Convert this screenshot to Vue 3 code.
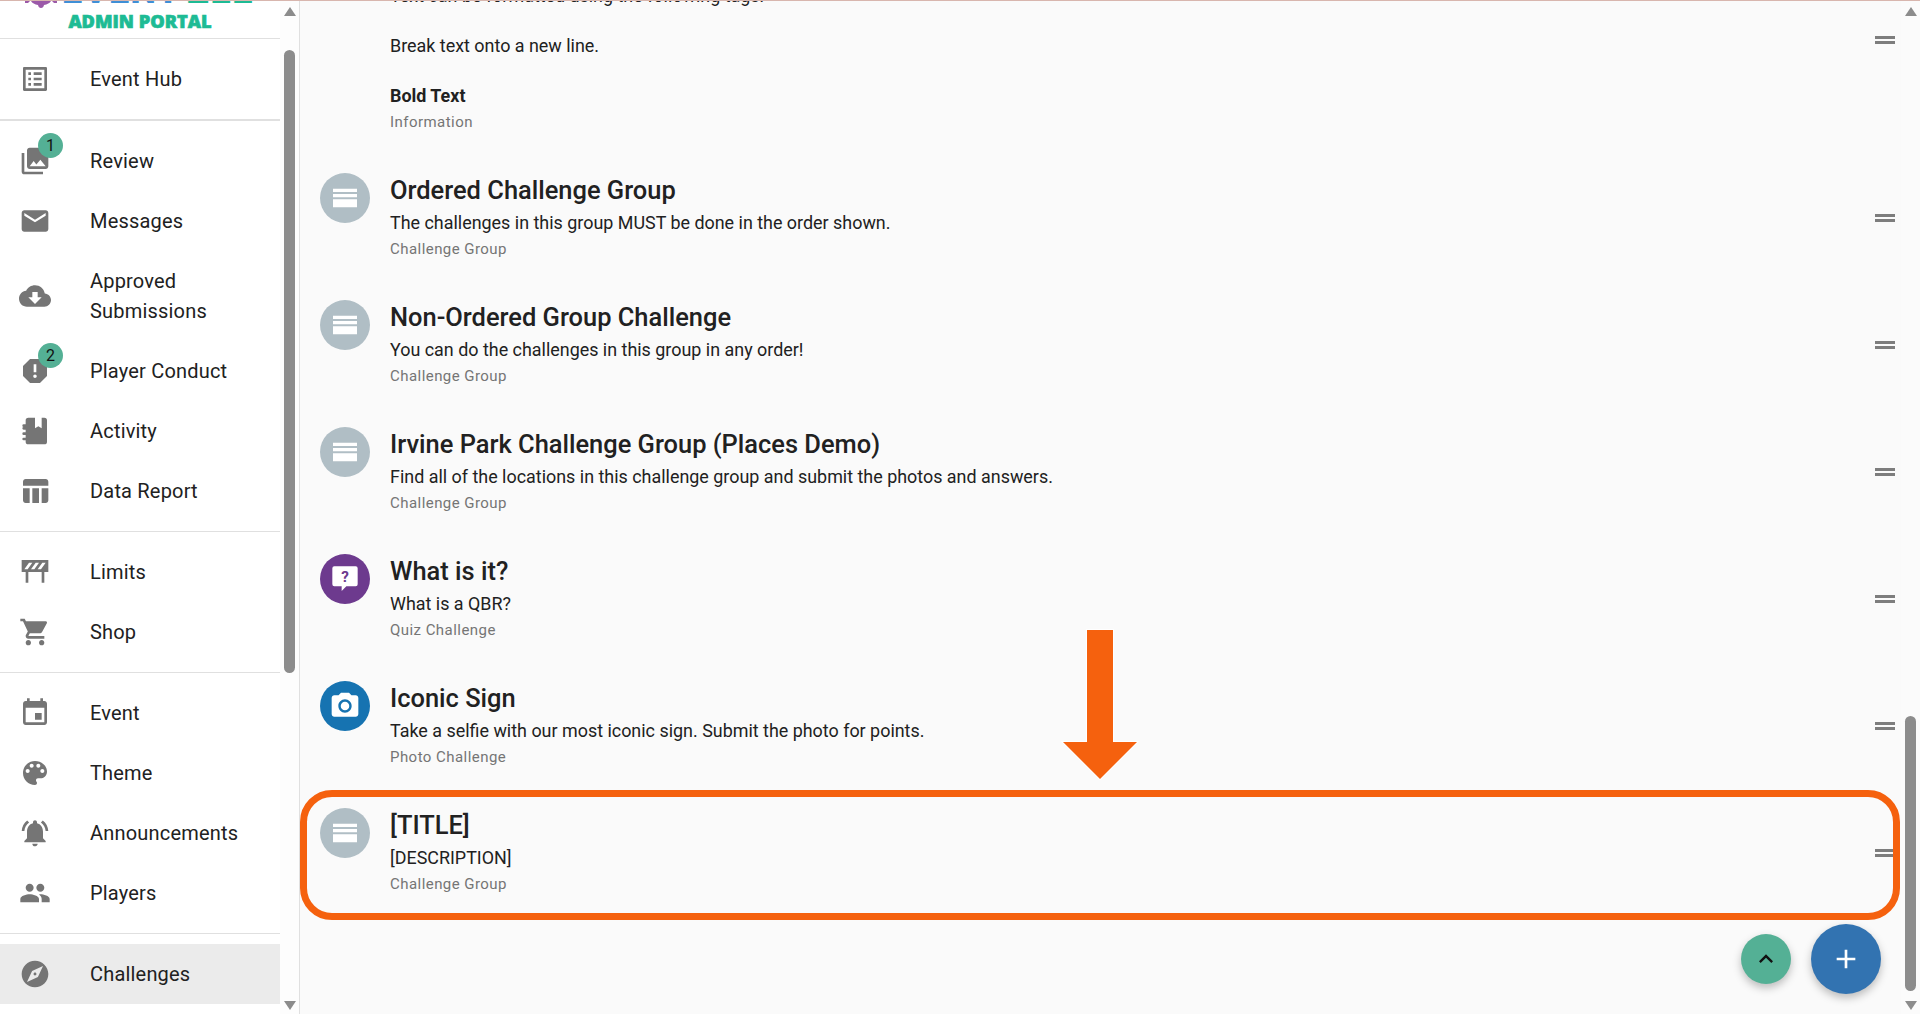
<script setup>
const icons = {
  hub: 'M19 5v14H5V5h14m1.1-2H3.9c-.5 0-.9.4-.9.9v16.2c0 .4.4.9.9.9h16.2c.4 0 .9-.5.9-.9V3.9c0-.5-.5-.9-.9-.9zM11 7h6v2h-6V7zm0 4h6v2h-6v-2zm0 4h6v2h-6zM7 7h2v2H7zm0 4h2v2H7zm0 4h2v2H7z',
  review: 'M22 16V4c0-1.1-.9-2-2-2H8c-1.1 0-2 .9-2 2v12c0 1.1.9 2 2 2h12c1.1 0 2-.9 2-2zm-11-4l2.03 2.71L16 11l4 5H8l3-4zM2 6v14c0 1.1.9 2 2 2h14v-2H4V6H2z',
  email: 'M20 4H4c-1.1 0-1.99.9-1.99 2L2 18c0 1.1.9 2 2 2h16c1.1 0 2-.9 2-2V6c0-1.1-.9-2-2-2zm0 4l-8 5-8-5V6l8 5 8-5v2z',
  cloud: 'M19.35 10.04C18.67 6.59 15.64 4 12 4 9.11 4 6.6 5.64 5.35 8.04 2.34 8.36 0 10.91 0 14c0 3.31 2.69 6 6 6h13c2.76 0 5-2.24 5-5 0-2.64-2.05-4.78-4.65-4.96zM17 13l-5 5-5-5h3V9h4v4h3z',
  report: 'M15.73 3H8.27L3 8.27v7.46L8.27 21h7.46L21 15.73V8.27L15.73 3zM12 17.3c-.72 0-1.3-.58-1.3-1.3 0-.72.58-1.3 1.3-1.3.72 0 1.3.58 1.3 1.3 0 .72-.58 1.3-1.3 1.3zm1-4.3h-2V7h2v6z',
  notebook: 'M7 2h5v8l2.5-1.5L17 10V2h2a2 2 0 0 1 2 2v16a2 2 0 0 1-2 2H7a2 2 0 0 1-2-2v-1H3.5a1 1 0 0 1 0-2H5v-2H3.5a1 1 0 0 1 0-2H5v-2H3.5a1 1 0 0 1 0-2H5V9H3.5a1 1 0 0 1 0-2H5V4a2 2 0 0 1 2-2z',
  table: 'M10 10.02h5V21h-5zM17 21h3c1.1 0 2-.9 2-2v-9h-5v11zm3-18H5c-1.1 0-2 .9-2 2v3h19V5c0-1.1-.9-2-2-2zM3 19c0 1.1.9 2 2 2h3V10H3v9z',
  barrier: 'M2 3h20v9h-3v8h-2v-8H7v8H5v-8H2V3zm5.5 2L4 10h2.5L10 5H7.5zm5 0L9 10h2.5L15 5h-2.5zm5 0L14 10h2.5L20 5h-2.5z',
  cart: 'M7 18c-1.1 0-1.99.9-1.99 2S5.9 22 7 22s2-.9 2-2-.9-2-2-2zM1 2v2h2l3.6 7.59-1.35 2.45c-.16.28-.25.61-.25.96 0 1.1.9 2 2 2h12v-2H7.42c-.14 0-.25-.11-.25-.25l.03-.12.9-1.63h7.45c.75 0 1.41-.41 1.75-1.03l3.58-6.49c.08-.14.12-.31.12-.48 0-.55-.45-1-1-1H5.21l-.94-2H1zm16 16c-1.1 0-1.99.9-1.99 2s.89 2 1.99 2 2-.9 2-2-.9-2-2-2z',
  event: 'M17 12h-5v5h5v-5zM16 1v2H8V1H6v2H5c-1.11 0-1.99.9-1.99 2L3 19c0 1.1.89 2 2 2h14c1.1 0 2-.9 2-2V5c0-1.1-.9-2-2-2h-1V1h-2zm3 18H5V8h14v11z',
  palette: 'M12 3c-4.97 0-9 4.03-9 9s4.03 9 9 9c.83 0 1.5-.67 1.5-1.5 0-.39-.15-.74-.39-1.01-.23-.26-.38-.61-.38-.99 0-.83.67-1.5 1.5-1.5H16c2.76 0 5-2.24 5-5 0-4.42-4.03-8-9-8zm-5.5 9c-.83 0-1.5-.67-1.5-1.5S5.67 9 6.5 9 8 9.67 8 10.5 7.33 12 6.5 12zm3-4C8.67 8 8 7.33 8 6.5S8.67 5 9.5 5s1.5.67 1.5 1.5S10.33 8 9.5 8zm5 0c-.83 0-1.5-.67-1.5-1.5S13.67 5 14.5 5s1.5.67 1.5 1.5S15.33 8 14.5 8zm3 4c-.83 0-1.5-.67-1.5-1.5S16.67 9 17.5 9s1.5.67 1.5 1.5-.67 1.5-1.5 1.5z',
  bell: 'M7.58 4.08L6.15 2.65C3.75 4.48 2.17 7.3 2.03 10.5h2c.15-2.65 1.51-4.97 3.55-6.42zm12.39 6.42h2c-.15-3.2-1.73-6.02-4.12-7.85l-1.42 1.43c2.02 1.45 3.39 3.77 3.54 6.42zM18 11c0-3.07-1.64-5.64-4.5-6.32V4c0-.83-.67-1.5-1.5-1.5s-1.5.67-1.5 1.5v.68C7.63 5.36 6 7.92 6 11v5l-2 2v1h16v-1l-2-2v-5zm-6 11c.14 0 .27-.01.4-.04.65-.14 1.18-.58 1.44-1.18.1-.24.15-.5.15-.78h-4c.01 1.1.9 2 2.01 2z',
  people: 'M16 11c1.66 0 2.99-1.34 2.99-3S17.66 5 16 5c-1.66 0-3 1.34-3 3s1.34 3 3 3zm-8 0c1.66 0 2.99-1.34 2.99-3S9.66 5 8 5C6.34 5 5 6.34 5 8s1.34 3 3 3zm0 2c-2.33 0-7 1.17-7 3.5V19h14v-2.5c0-2.33-4.67-3.5-7-3.5zm8 0c-.29 0-.62.02-.97.05 1.16.84 1.97 1.97 1.97 3.45V19h6v-2.5c0-2.33-4.67-3.5-7-3.5z',
  explore: 'M12 10.9c-.61 0-1.1.49-1.1 1.1s.49 1.1 1.1 1.1c.61 0 1.1-.49 1.1-1.1s-.49-1.1-1.1-1.1zM12 2C6.48 2 2 6.48 2 12s4.48 10 10 10 10-4.48 10-10S17.52 2 12 2zm2.19 12.19L6 18l3.81-8.19L18 6l-3.81 8.19z',
  group: 'M3 5h18v2.5H3zM3 9h18v2.5H3zM3 13h18v6H3z',
  quiz: 'M4 2.5h16a1.5 1.5 0 0 1 1.5 1.5v12a1.5 1.5 0 0 1-1.5 1.5h-7l-3.5 3.5v-3.5H4A1.5 1.5 0 0 1 2.5 16V4A1.5 1.5 0 0 1 4 2.5z',
  camera: 'M12 8.8a3.2 3.2 0 1 0 0 6.4 3.2 3.2 0 0 0 0-6.4zM9 2L7.17 4H4c-1.1 0-2 .9-2 2v12c0 1.1.9 2 2 2h16c1.1 0 2-.9 2-2V6c0-1.1-.9-2-2-2h-3.17L15 2H9zm3 15c-2.76 0-5-2.24-5-5s2.24-5 5-5 5 2.24 5 5-2.24 5-5 5z',
}

const navGroups = [
  [{ label: 'Event Hub', icon: 'hub' }],
  [
    { label: 'Review', icon: 'review', badge: 1 },
    { label: 'Messages', icon: 'email' },
    { label: 'Approved Submissions', icon: 'cloud' },
    { label: 'Player Conduct', icon: 'report', badge: 2 },
    { label: 'Activity', icon: 'notebook' },
    { label: 'Data Report', icon: 'table' },
  ],
  [
    { label: 'Limits', icon: 'barrier' },
    { label: 'Shop', icon: 'cart' },
  ],
  [
    { label: 'Event', icon: 'event' },
    { label: 'Theme', icon: 'palette' },
    { label: 'Announcements', icon: 'bell' },
    { label: 'Players', icon: 'people' },
  ],
  [{ label: 'Challenges', icon: 'explore', active: true }],
]

const challenges = [
  { title: 'Ordered Challenge Group', desc: 'The challenges in this group MUST be done in the order shown.', type: 'Challenge Group', icon: 'group', color: '#b0bec5' },
  { title: 'Non-Ordered Group Challenge', desc: 'You can do the challenges in this group in any order!', type: 'Challenge Group', icon: 'group', color: '#b0bec5' },
  { title: 'Irvine Park Challenge Group (Places Demo)', desc: 'Find all of the locations in this challenge group and submit the photos and answers.', type: 'Challenge Group', icon: 'group', color: '#b0bec5' },
  { title: 'What is it?', desc: 'What is a QBR?', type: 'Quiz Challenge', icon: 'quiz', color: '#6d3a8e', mark: '?' },
  { title: 'Iconic Sign', desc: 'Take a selfie with our most iconic sign. Submit the photo for points.', type: 'Photo Challenge', icon: 'camera', color: '#1673b1' },
  { title: '[TITLE]', desc: '[DESCRIPTION]', type: 'Challenge Group', icon: 'group', color: '#b0bec5' },
]
</script>

<template>
  <div class="page">
    <div class="topline"></div>
    <div class="shell">
      <aside class="sidebar">
        <div class="sidebar-scroll">
          <div class="logo">
            <svg class="logo-mark" width="32" height="10" viewBox="0 0 32 10">
              <path d="M0 0h5l-2 2H0zM27 0h5v2h-3zM6 0h20c-1 2-4 3.5-7 4-.3 1.800-1.500 3-3 3s-2.700-1.200-3-3c-3-.5-6-2-7-4z" fill="#9b59a8" />
            </svg>
            <div class="logo-name"><span class="logo-blue">EVENT</span><span class="logo-green">ZEE</span></div>
            <div class="logo-sub">ADMIN PORTAL</div>
          </div>
          <nav v-for="(group, i) in navGroups" :key="i" class="nav-group">
            <div v-for="item in group" :key="item.label" class="nav-item" :class="{ active: item.active }">
              <span class="nav-icon">
                <svg viewBox="0 0 24 24" width="32" height="32"><path :d="icons[item.icon]" /></svg>
                <span v-if="item.badge" class="badge">{{ item.badge }}</span>
              </span>
              <span class="nav-label">{{ item.label }}</span>
            </div>
          </nav>
        </div>
        <div class="scrollbar side-bar">
          <span class="arrow up"></span>
          <span class="thumb"></span>
          <span class="arrow down"></span>
        </div>
      </aside>

      <main class="main">
        <div class="list">
          <div class="row row-first">
            <div class="avatar"></div>
            <div class="row-body">
              <p class="desc">Text can be formatted using the following tags:</p>
              <p class="desc spaced">Break text onto a new line.</p>
              <p class="desc spaced bold">Bold Text</p>
              <p class="type">Information</p>
            </div>
            <div class="handle"></div>
          </div>
          <div v-for="c in challenges" :key="c.title" class="row">
            <div class="avatar" :style="{ background: c.color }">
              <svg viewBox="0 0 24 24" width="32" height="32">
                <path :d="icons[c.icon]" fill="#fff" />
                <text v-if="c.mark" class="mark" x="12" y="14.2" :fill="c.color">{{ c.mark }}</text>
              </svg>
            </div>
            <div class="row-body">
              <h3 class="title">{{ c.title }}</h3>
              <p class="desc">{{ c.desc }}</p>
              <p class="type">{{ c.type }}</p>
            </div>
            <div class="handle"></div>
          </div>
        </div>

        <!-- annotation drawn over the screenshot -->
        <svg class="arrow-note" width="80" height="155" viewBox="0 0 80 155">
          <path d="M27 3h26v112h24L40 152 3 115h24z" fill="#f5610e" stroke="#fff" stroke-width="2" paint-order="stroke" />
        </svg>
        <div class="highlight"></div>

        <button class="fab fab-top">
          <svg viewBox="0 0 24 24" width="28" height="28"><path d="M7.41 15.41L12 10.83l4.59 4.58L18 14l-6-6-6 6z" fill="#111" /></svg>
        </button>
        <button class="fab fab-add">
          <svg viewBox="0 0 24 24" width="32" height="32"><path d="M19 13h-6v6h-2v-6H5v-2h6V5h2v6h6v2z" fill="#fff" /></svg>
        </button>
      </main>

      <div class="scrollbar main-bar">
        <span class="arrow up"></span>
        <span class="thumb"></span>
        <span class="arrow down"></span>
      </div>
    </div>
  </div>
</template>

<style>
html, body {
  margin: 0;
  height: 100%;
  overflow: hidden;
}
</style>

<style scoped>
.page {
  height: 1014px;
  display: flex;
  flex-direction: column;
  overflow: hidden;
  font-family: Roboto, "Liberation Sans", sans-serif;
  color: #212121;
  background: #fafafa;
}

.topline {
  height: 1px;
  flex: none;
  background: #d8b6ae;
}

.shell {
  flex: 1;
  min-height: 0;
  display: flex;
}

.sidebar {
  width: 299px;
  flex: none;
  display: flex;
  background: #fff;
  border-right: 1px solid #e0e0e0;
}

.sidebar-scroll {
  width: 280px;
  flex: none;
  overflow: hidden;
}

.logo {
  height: 37px;
  border-bottom: 1px solid #e0e0e0;
  position: relative;
  overflow: hidden;
  display: flex;
  flex-direction: column;
  justify-content: flex-end;
  align-items: center;
}

.logo-mark {
  position: absolute;
  top: 0;
  left: 25px;
}

.logo-name {
  position: absolute;
  top: -24px;
  left: 62px;
  font-size: 36px;
  line-height: 28px;
  font-weight: 900;
  letter-spacing: 1.5px;
  white-space: nowrap;
}

.logo-blue {
  color: #3f8fd6;
}

.logo-green {
  color: #1dbb94;
  margin-left: 6px;
}

.logo-sub {
  margin-bottom: 8px;
  font-family: "Open Sans", sans-serif;
  font-size: 18.2px;
  line-height: 18px;
  font-weight: 800;
  color: #1dbb94;
  -webkit-text-stroke: 0.7px #1dbb94;
}

.nav-group {
  padding: 10px 0;
  border-bottom: 1px solid #e0e0e0;
}

.nav-group:nth-of-type(1) {
  border-bottom-width: 2px;
}

.nav-group:last-child {
  border-bottom: none;
}

.nav-item {
  display: flex;
  align-items: center;
  padding: 15px 0 15px 19px;
}

.nav-item.active {
  background: #ebebeb;
}

.nav-icon {
  position: relative;
  width: 32px;
  height: 32px;
  flex: none;
  margin: -1px 39px -1px 0;
}

.nav-icon svg {
  display: block;
  fill: #757575;
}

.nav-label {
  font-size: 20px;
  line-height: 30px;
  letter-spacing: 0.19px;
  width: 170px;
}

.badge {
  position: absolute;
  top: -12px;
  left: 19px;
  width: 25px;
  height: 25px;
  border-radius: 50%;
  background: #54b095;
  color: #111;
  font-size: 16px;
  line-height: 25px;
  text-align: center;
}

.scrollbar {
  flex: none;
  position: relative;
  display: flex;
  flex-direction: column;
  align-items: center;
  width: 19px;
  padding: 6px 0 4px;
  box-sizing: border-box;
}

.side-bar {
  background: #fdfdfd;
}

.main-bar {
  background: #fbfbfb;
}

.arrow {
  width: 0;
  height: 0;
  flex: none;
  border-left: 6.5px solid transparent;
  border-right: 6.5px solid transparent;
}

.arrow.up {
  border-bottom: 9px solid #8c8c8c;
}

.arrow.down {
  border-top: 9px solid #8c8c8c;
}

.thumb {
  width: 11px;
  border-radius: 6px;
  background: #8c8c8c;
}

.side-bar .thumb {
  height: 623px;
  margin: 34px 0 auto;
}

.main-bar .thumb {
  height: 275px;
  margin: auto 0 10px;
}

.main {
  flex: 1;
  min-width: 0;
  position: relative;
  overflow: hidden;
  background: #fafafa;
}

.list {
  margin-top: -72px;
}

.row {
  height: 127px;
  box-sizing: border-box;
  padding: 16px 6px 0 20px;
  display: flex;
}

.row-first {
  height: 228px;
}

.avatar {
  width: 50px;
  height: 50px;
  flex: none;
  border-radius: 50%;
  margin-right: 20px;
  display: flex;
  align-items: center;
  justify-content: center;
}

.row-body {
  flex: 1;
  min-width: 0;
}

.row-first .row-body {
  padding-top: 38px;
}

.mark {
  font-size: 11.5px;
  font-weight: 700;
  text-anchor: middle;
}

.title {
  margin: 1px 0 4px;
  font-size: 25.44px;
  line-height: 32px;
  font-weight: 500;
}

.desc {
  margin: 0;
  font-size: 17.92px;
  line-height: 25px;
}

.spaced {
  margin-top: 25px;
}

.bold {
  font-weight: 700;
}

.type {
  margin: 4px 0 0;
  font-size: 15px;
  line-height: 20px;
  letter-spacing: 0.45px;
  color: #757575;
}

.handle {
  width: 20px;
  height: 2px;
  flex: none;
  align-self: center;
  margin-top: -22px;
  border-top: 3px solid #7d7d7d;
  border-bottom: 3px solid #7d7d7d;
}

.arrow-note {
  position: absolute;
  left: 760px;
  top: 626px;
}

.highlight {
  position: absolute;
  left: 0;
  top: 789px;
  width: 1600px;
  height: 130px;
  box-sizing: border-box;
  border: 7px solid #f5610e;
  border-radius: 32px;
}

.fab {
  position: absolute;
  border: none;
  padding: 0;
  border-radius: 50%;
  display: flex;
  align-items: center;
  justify-content: center;
  box-shadow: 0 4px 8px rgba(0, 0, 0, 0.25);
}

.fab-top {
  left: 1441px;
  top: 933px;
  width: 50px;
  height: 50px;
  background: #54b095;
}

.fab-add {
  left: 1511px;
  top: 923px;
  width: 70px;
  height: 70px;
  background: #3273b1;
}
</style>
